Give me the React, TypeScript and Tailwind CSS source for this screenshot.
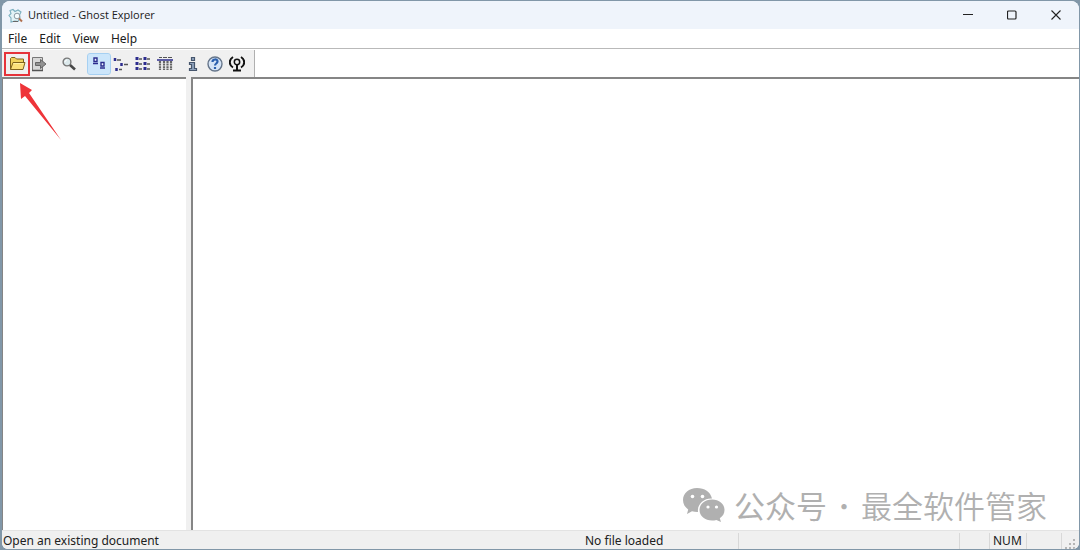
import type { ReactNode } from "react";

const ink = "#2c2c8e";

function GhostIcon() {
  return (
    <svg width="15" height="15" viewBox="0 0 15 15" aria-hidden="true">
      <path d="M2 2.500 5 1.500l2 2 3-1.500 3 2-1.500 3 .5 3-2 3.500-3-.5-4 1L3 10 1 7.500l2-2Z" fill="#e3f3f6" stroke="#7bb0bf" strokeWidth="1.100" />
      <circle cx="9" cy="8" r="2.800" fill="#f4fcfd" stroke="#8b9ba3" />
      <path d="m11 10.500 3 3" stroke="#b0704f" strokeWidth="2" />
      <path d="M5 13.500h5" stroke="#666" />
    </svg>
  );
}

function FolderIcon() {
  return (
    <svg width="17" height="15" viewBox="0 0 17 15" aria-hidden="true">
      <path d="M1.500 13.500V2.500l1-1h3.500l1.500 1.500h7v3" fill="#f0d25c" stroke="#80631d" />
      <path d="m1.500 13.500 2.500-7h12l-2 7Z" fill="#fbe07a" stroke="#80631d" />
      <path d="M4.500 7.500h10" stroke="#fff2a4" />
    </svg>
  );
}

function ExtractIcon() {
  return (
    <svg width="16" height="16" viewBox="0 0 16 16" aria-hidden="true">
      <path d="M1.500 1.500h10v13h-10z" fill="#d8d8d8" stroke="#777" />
      <path d="M1 14.500h11" stroke="#555" strokeWidth="1.500" />
      <path d="M4.500 6.500h5v-3l5.500 4.500-5.500 4.500v-3h-5Z" fill="#929292" stroke="#666" />
    </svg>
  );
}

function FindIcon() {
  return (
    <svg width="16" height="16" viewBox="0 0 16 16" aria-hidden="true">
      <circle cx="6" cy="6" r="3.900" fill="#dce9ec" stroke="#777" strokeWidth="1.400" />
      <path d="M4 6q0-2 2-2" fill="none" stroke="white" />
      <path d="m9 9 5 4.500" stroke="#484848" strokeWidth="2.600" />
    </svg>
  );
}

function LargeIconsIcon() {
  return (
    <svg width="16" height="16" viewBox="0 0 16 16" fill="none" stroke={ink} aria-hidden="true">
      <path d="M3 2h3v3.500H3zM10 6.500h3v3.500h-3z" fill="#eef6ff" strokeWidth="1.400" />
      <path d="M2 7.500h5M9 12h5" strokeWidth="1.600" />
    </svg>
  );
}

function SmallIconsIcon() {
  return (
    <svg width="16" height="16" viewBox="0 0 16 16" fill="none" aria-hidden="true">
      <path d="M2 2v3M8.500 7v3M3.500 12v3" stroke={ink} strokeWidth="2.500" />
      <path d="M4 4h4M11 8.500h4M6 13.500h3" stroke="#555" strokeWidth="1.300" />
    </svg>
  );
}

function ListIcon() {
  return (
    <svg width="16" height="16" viewBox="0 0 16 16" fill="none" aria-hidden="true">
      <path d="M2 1v3M2 6v3M2 11v3M10 1v3M10 6v3M10 11v3" stroke={ink} strokeWidth="3" />
      <path d="M4 3h3M4 8h3M4 13h3M12 3h3M12 8h3M12 13h3" stroke="#555" strokeWidth="1.300" />
    </svg>
  );
}

function DetailsIcon() {
  return (
    <svg width="16" height="16" viewBox="0 0 16 16" fill="none" aria-hidden="true">
      <path d="M2 1.500h3M6 1.500h4M11 1.500h4" stroke="#555" />
      <path d="M0 4h16" stroke={ink} strokeWidth="1.600" />
      <path d="M3 5v9M7 5v9M10.500 5v9M14 5v9" stroke="#666" strokeWidth="2.200" strokeDasharray="2 0.600" />
    </svg>
  );
}

function InfoIcon() {
  return (
    <svg width="12" height="16" viewBox="0 0 12 16" aria-hidden="true">
      <path d="M4.500 1.500h3v3h-3zM2.500 6.500h5v6h2v2h-7v-2h2v-4h-2z" fill="#8fa3bd" stroke="#46566d" strokeWidth="1.200" />
    </svg>
  );
}

function HelpIcon() {
  return (
    <svg width="16" height="16" viewBox="0 0 16 16" fill="none" aria-hidden="true">
      <circle cx="8" cy="8" r="7" fill="#d5e4f7" stroke="#65758a" strokeWidth="1.400" />
      <path d="M5.500 6c0-3.300 5-3.300 5-.4C10.500 7.500 8 7.500 8 9.500M8 11v2" stroke="#2b60ae" strokeWidth="2.200" />
    </svg>
  );
}

function AntennaIcon() {
  return (
    <svg width="16" height="16" viewBox="0 0 16 16" fill="none" stroke="#111" aria-hidden="true">
      <circle cx="8" cy="6" r="2.700" strokeWidth="1.500" />
      <path d="M8 9v5M4 14.500h8" strokeWidth="2" />
      <path d="M4 1C-.3 3.500-.3 9 4 11.500M12 1c4.300 2.500 4.300 8 0 10.500" strokeWidth="2" />
    </svg>
  );
}

function WechatLogo() {
  return (
    <svg width="44" height="36" viewBox="0 0 44 36" aria-hidden="true">
      <path d="M15 1C7 1 1 6 1 13c0 4 2 7.200 5.200 9.500L5 27l5-2.700c2 .6 4 .9 6 .8C15 17 22 11 30 11.500 28.500 5 22.500 1 15 1Z" fill="#b0b0b0" />
      <path d="M30 12.500c-7 0-12.500 4.600-12.500 10.500S23 33.500 30 33.500c1.500 0 3-.2 4.400-.6L39 35l-1.200-3.700c3-2 4.700-5 4.700-8.300 0-5.900-5.500-10.500-12.500-10.500Z" fill="#b0b0b0" />
      <g fill="white"><circle cx="10.500" cy="9.500" r="1.800" /><circle cx="20.500" cy="9.500" r="1.800" /><circle cx="26" cy="20" r="1.600" /><circle cx="34.500" cy="20" r="1.600" /></g>
    </svg>
  );
}

function Tool({ label, active, children }: { label: string; active?: boolean; children: ReactNode }) {
  return (
    <button
      type="button"
      aria-label={label}
      className={`flex h-5 w-[22px] items-center justify-center rounded-xs ${active ? "bg-[#cce6fb] outline outline-[#a6d0f2]" : ""}`}
    >
      {children}
    </button>
  );
}

export default function App() {
  return (
    <div className="flex h-screen flex-col bg-[#8197a8] pt-px pr-px pb-px pl-0.5 font-['Noto_Sans',sans-serif] text-xs text-[#202020]">
      <div className="relative flex min-h-0 flex-1 flex-col overflow-hidden rounded-t-lg rounded-b-md bg-white">
        <header className="flex h-7 shrink-0 items-center bg-[#eff4fb] pr-px pl-1.5">
          <GhostIcon />
          <h1 className="ml-[5px] flex-1 font-['Open_Sans',sans-serif] text-[11px]">Untitled - Ghost Explorer</h1>
          <button type="button" aria-label="Minimize" className="flex h-7 w-11 items-center justify-center">
            <svg width="10" height="10" viewBox="0 0 10 10" stroke="#222"><path d="M0 4.500h10" /></svg>
          </button>
          <button type="button" aria-label="Maximize" className="flex h-7 w-11 items-center justify-center">
            <svg width="10" height="10" viewBox="0 0 10 10" fill="none" stroke="#222"><rect x="0.500" y="1" width="8.500" height="8" rx="1" strokeWidth="1.200" /></svg>
          </button>
          <button type="button" aria-label="Close" className="flex h-7 w-11 items-center justify-center">
            <svg width="10" height="10" viewBox="0 0 10 10" stroke="#222"><path d="m0.500 0.500 9 9M9.500 0.500l-9 9" strokeWidth="1.100" /></svg>
          </button>
        </header>

        <nav aria-label="Menu" className="flex h-5 shrink-0 items-center gap-3 border-b border-[#b9b9b9] pl-1.5">
          {["File", "Edit", "View", "Help"].map((name) => (
            <button key={name} type="button">{name}</button>
          ))}
        </nav>

        <div className="flex h-7 shrink-0 pt-px">
          <div role="toolbar" aria-label="Tools" className="flex items-center border-r border-[#b0b0b0] bg-[#f0f0f0] pr-1.5 pl-1">
            <div className="relative">
              <Tool label="Open"><FolderIcon /></Tool>
              <span className="pointer-events-none absolute -inset-x-0.5 -inset-y-0.5 border-2 border-[#e5333a]" />
              <svg className="pointer-events-none absolute top-7 left-3 z-10" width="46" height="62" viewBox="0 0 46 62" aria-hidden="true">
                <path d="m2 1 12 7-3 3 32 47L7 14l-4 3Z" fill="#ee3439" />
              </svg>
            </div>
            <Tool label="Extract"><ExtractIcon /></Tool>
            <div className="ml-2 flex"><Tool label="Find"><FindIcon /></Tool></div>
            <div className="ml-2 flex">
              <Tool label="Large icons" active><LargeIconsIcon /></Tool>
              <Tool label="Small icons"><SmallIconsIcon /></Tool>
              <Tool label="List"><ListIcon /></Tool>
              <Tool label="Details"><DetailsIcon /></Tool>
            </div>
            <div className="ml-1.5 flex">
              <Tool label="Properties"><InfoIcon /></Tool>
              <Tool label="Help"><HelpIcon /></Tool>
              <Tool label="Multicast"><AntennaIcon /></Tool>
            </div>
          </div>
        </div>

        <main className="flex min-h-0 flex-1 bg-[#f0f0f0]">
          <section aria-label="Folders" className="w-[184px] shrink-0 border-t-2 border-l border-[#858585] bg-white" />
          <section aria-label="Files" className="ml-[5px] flex-1 border-t-2 border-l-2 border-[#858585] bg-white" />
        </main>

        <footer className="flex h-[19px] shrink-0 items-center border-t border-[#e3e3e3] bg-[#f0f0f0] pt-0.5 pl-px">
          <p className="flex-1">Open an existing document</p>
          <p className="w-[153px]">No file loaded</p>
          <div className="flex h-4 w-[341px] border-l border-[#d8d8d8]">
            <span className="flex-1" />
            <span className="w-[30px] border-l border-[#d8d8d8]" />
            <span className="w-[37px] border-l border-[#d8d8d8] pl-[3px]">NUM</span>
            <span className="w-[35px] border-l border-[#d8d8d8]" />
            <span className="flex w-[18px] items-end justify-end border-l border-[#d8d8d8] pr-1">
              <svg width="10" height="10" viewBox="0 0 10 10" fill="#b5b5b5" aria-hidden="true">
                <path d="M8 0h2v2H8zM4 4h2v2H4zM8 4h2v2H8zM0 8h2v2H0zM4 8h2v2H4zM8 8h2v2H8z" />
              </svg>
            </span>
          </div>
        </footer>

        <div className="pointer-events-none absolute right-8 bottom-[22px] flex items-center font-['Noto_Sans_CJK_SC',sans-serif] text-[31px] leading-[44px] text-[#b0b0b0]">
          <WechatLogo />
          <span className="ml-2">公众号</span>
          <span className="w-[34px] text-center font-thin">·</span>
          <span className="font-[350]">最全软件管家</span>
        </div>
      </div>
    </div>
  );
}
